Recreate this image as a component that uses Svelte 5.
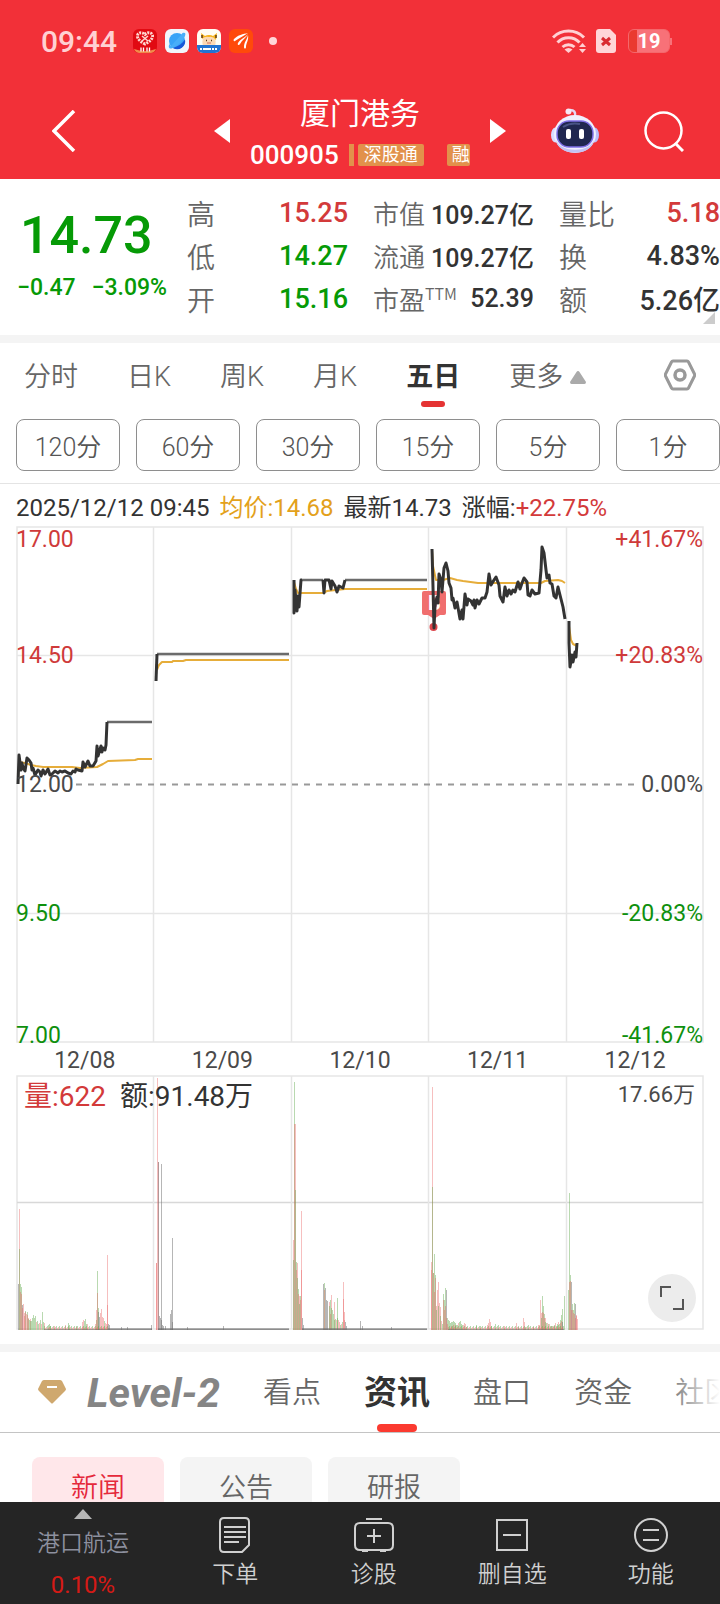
<script>
  let period = '五日';
  let section = '资讯';
  let newsTab = '新闻';

  const periods = ['分时', '日K', '周K', '月K', '五日'];
  const minutes = ['120分', '60分', '30分', '15分', '5分', '1分'];
  const sections = ['看点', '资讯', '盘口', '资金', '社区'];
  const newsTabs = ['新闻', '公告', '研报'];
  const days = ['12/08', '12/09', '12/10', '12/11', '12/12'];

  const stats = [
    [
      { label: '高', value: '15.25', tone: 'up' },
      { label: '低', value: '14.27', tone: 'down' },
      { label: '开', value: '15.16', tone: 'down' }
    ],
    [
      { label: '市值', value: '109.27', unit: '亿' },
      { label: '流通', value: '109.27', unit: '亿' },
      { label: '市盈', sup: 'TTM', value: '52.39' }
    ],
    [
      { label: '量比', value: '5.18', tone: 'up' },
      { label: '换', value: '4.83%' },
      { label: '额', value: '5.26', unit: '亿' }
    ]
  ];

  const axis = [
    { y: 547, price: '17.00', rate: '+41.67%', fill: '#cf3a3a' },
    { y: 663, price: '14.50', rate: '+20.83%', fill: '#cf3a3a' },
    { y: 792, price: '12.00', rate: '0.00%', fill: '#4a4a4a' },
    { y: 921, price: '9.50', rate: '-20.83%', fill: '#0e900e' },
    { y: 1043, price: '7.00', rate: '-41.67%', fill: '#0e900e' }
  ];

  const columns = [153.5, 291.5, 428.5, 566.5];

  const priceLines = [
    '18,784 19,755 21,770 22,763 23,768 25,771 27,758 29,760 31,763 32,770 33,768 35,775 38,770 40,772 41,776 43,770 45,774 48,769 50,775 51,775 55,771 58,773 60,771 62,772 65,771 68,773 71,774 73,771 75,772 76,769 78,770 82,771 83,762 85,767 88,761 90,766 93,766 96,761 97,746 98,756 101,746 102,752 103,748 105,750 106,745 107,722',
    '156,681 157,654',
    '294,580 294,613 295,590 297,611 298,596 299,607 301,580 302,580',
    '323,580 324,593 325,580 329,580 331,589 332,581 335,586 337,592 339,586 343,588 345,580',
    '432,549 433,587 434,628 435,606 437,597 438,603 439,574 441,580 442,592 444,568 446,563 448,571 449,583 451,588 452,600 453,598 455,608 457,602 460,619 462,610 463,619 465,594 467,605 468,599 471,601 473,605 474,600 475,608 477,600 479,604 482,598 485,598 487,592 489,574 491,585 494,580 496,577 499,585 500,596 503,602 505,587 507,596 509,590 511,594 513,590 515,592 518,582 520,589 522,583 524,578 527,582 528,595 530,596 532,590 535,594 539,593 541,570 542,547 544,553 546,570 547,578 549,575 550,583 552,584 554,596 556,598 558,587 561,599 563,607 565,619',
    '569,621 569,643 570,667 572,655 573,662 575,652 576,657 577,643'
  ];

  // limit-up stretches, where the price does not move
  const flatLines = ['107,722 152,722', '157,654 289,654', '302,580 323,580', '345,580 427,580'];

  const averageLines = [
    '19,762 25,763 31,765 36,766 43,767 72,767 80,768 97,767 103,764 108,761 135,760 138,759 152,759',
    '157,670 159,665 162,662 172,662 173,661 183,661 186,660 289,660',
    '294,582 296,589 298,593 323,593 327,591 345,589 427,589',
    '432,550 433,566 436,580 443,580 450,578 457,580 463,581 478,583 541,583 545,581 558,580 562,581 565,583',
    '569,626 571,640 573,644 577,646'
  ];

  // x:height and r (buy), g (sell) or n (flat)
  const spikes = `
    18:46n 19:121r 19:81g 20:46g 20:38r 21:43g 21:36r 22:25n 22:22r 23:26r 24:17r 24:14r 25:19g 25:18r 26:16r 27:18g 27:15r
    28:11g 28:12r 29:10g 30:11r 30:9g 31:9g 32:12g 33:15g 34:12g 35:14g 36:8r 37:9g 38:6g 39:7r 40:10g 41:6r 42:18g 43:8g 44:7r
    48:5g 49:6g 50:4g 54:4r 65:5r 68:7g 69:5g 76:4g 82:8r 83:10r 84:9g 85:11g 86:6g 87:6r 95:6r 96:10g 96:20r 97:59g 97:37r
    98:22g 98:18n 99:13n 100:17r 101:21r 102:13r 103:12r 104:9g 105:7r 106:6r 107:75r 107:25r 108:6n 109:5n 121:3n 127:3n 151:5n
    156:67r 156:67r 157:252r 158:168r 158:168n 159:14n 160:12n 161:166n 161:10n 162:5n 163:4n 165:4n 170:16n 171:20n 172:92n
    172:8n 187:3n 223:4n
    293:90r 293:70g 294:248g 294:206r 295:206r 295:140g 296:68g 296:60r 297:67r 297:52g 298:41g 298:36r 299:34r 299:26g
    300:34g 300:30r 301:119r 301:60r 302:12n 303:5n 323:46n 324:47g 324:40r 325:42n 326:30n 327:29n 329:28r 329:24g 330:30g
    330:16r 331:35r 331:22g 332:20g 333:16g 334:28r 334:10g 335:11g 336:10r 337:32g 337:12g 338:10r 339:8r 340:5g 341:6r
    342:8g 343:48r 343:31r 344:18r 344:10r 345:8n 346:4n 360:9n 362:4n 391:3n
    431:68r 431:60r 432:243r 432:143g 433:57g 433:57r 434:76g 434:38r 435:55g 435:52r 436:24r 436:20g 437:40r 438:48r 438:24g
    439:27r 440:23r 440:14g 441:9r 442:6g 443:36g 443:30r 444:30g 444:20r 445:42g 445:24r 446:40n 446:12r 447:12g 447:6r
    448:10g 449:9g 450:7g 451:8g 451:4r 452:8g 453:9g 453:5r 454:8g 455:7g 455:5r 456:5g 457:5g 458:7r 459:8g 460:9g 461:6g
    462:5g 463:5r 464:7r 465:6r 466:3g 476:5g 480:4g 487:5r 488:7r 489:11r 490:8r 491:4g 495:6g 498:5g 504:4r 516:7r 518:3r
    523:12r 524:8r 525:3g 528:5g 533:3r 538:5r 539:5r 540:30r 541:17r 541:12g 542:34g 542:18r 543:24g 543:17r 544:16g 544:12r
    545:12r 545:8g 546:7g 547:7r 548:6g 549:6r 550:4g 551:4r 552:4g 553:4r 554:5g 555:7r 556:4g 557:6g 558:8r 558:5g 559:6g
    560:10g 560:7r 561:15g 561:9r 562:21g 562:8n 564:34g
    568:40g 569:137g 569:48r 570:55g 570:49r 571:48n 571:20r 572:26g 572:20r 573:20g 573:17r 574:27g 574:16r 575:26n 575:12r
    576:15r 576:14r 577:11r
  `.trim().split(/\s+/).map(readBar);

  const floor = [
    ...floorBars(44, 107, 'rgr'),
    ...floorBars(108, 151, 'n'),
    ...floorBars(158, 288, 'n'),
    ...floorBars(302, 426, 'n'),
    ...floorBars(448, 563, 'rgr')
  ];

  const bars = [...spikes, ...floor];

  function readBar(entry) {
    const [x, rest] = entry.split(':');
    return { x: Number(x), height: parseInt(rest), side: rest.slice(-1) };
  }

  function floorBars(from, to, sides) {
    const list = [];
    for (let x = from; x <= to; x++) {
      const height = sides === 'n' ? 2 : 2 + (x * 7) % 3;
      list.push({ x, height, side: sides[(x * 5) % sides.length] });
      list.push({ x, height: 1, side: 'n' });
    }
    return list;
  }
</script>

<div class="page">
  <header>
    <div class="status">
      <span class="clock">09:44</span>
      <svg class="app" viewBox="0 0 24 24">
        <rect width="24" height="24" rx="6" fill="#e10a12" />
        <path d="M1 20q11 4 22 0a6 6 0 0 1-5 4H6a6 6 0 0 1-5-4z" fill="#f08a4a" />
        <path d="M12 15C8 13 4 10 4.500 6.500 5 3.500 9 2.500 12 5.500c3-3 7-2 7.500 1 .500 3.500-3.500 6.500-7.500 8.500z" fill="none" stroke="#ffd9d2" stroke-width="3" stroke-dasharray="2 1" />
        <path d="m9 7 6 5M15 7l-6 5" stroke="#ffd9d2" stroke-width="1.500" />
        <path d="M8 18.500v4M10.500 18.500v4M14 18.500v4M16.500 18.500v4" stroke="#fff" stroke-width="1.300" />
      </svg>
      <svg class="app" viewBox="0 0 24 24">
        <rect width="24" height="24" rx="6" fill="#f1f5fb" />
        <circle cx="12" cy="12" r="8" fill="#39a3f7" />
        <path d="M4.500 15c-1.500 3-.500 5 2 4.500C12 18 18 12 20 7c1-3 0-4-2.500-3L16 6 6 17z" fill="#48aef9" />
        <path d="M20 10.500a8 8 0 0 1-12 8.500c5-1.500 9.500-4.500 12-8.500z" fill="#1757d8" />
      </svg>
      <svg class="app" viewBox="0 0 24 24">
        <rect width="24" height="24" rx="6" fill="#fffdf5" />
        <path d="M6 17c-2-7 1-11 6-11s8 4 6 11z" fill="#fcd9b4" />
        <path d="M5 10 4 4l4 3q4-2 8 0l4-3-1 7q-3-4-7-3-4-1-7 2z" fill="#f6b31c" />
        <path d="M0 16h24v2a6 6 0 0 1-6 6H6a6 6 0 0 1-6-6z" fill="#2273d2" />
        <path d="M5 6v3M19 6v3M9 11.500h1M14 11.500h1" stroke="#5d3b16" stroke-width="1.500" />
        <path d="M10 14h4" stroke="#d56d58" />
        <path d="M3 20h2m1 0h2m1-1v2m2-2v2m2-2v2m2-1h2m1 0h2" stroke="#fff" stroke-width="2" />
      </svg>
      <svg class="app" viewBox="0 0 24 24">
        <rect width="24" height="24" rx="6" fill="#ff4a0b" />
        <path d="M19 4C14 5 9 6 5 10c-1 1 0 3 1 2C10 9 15 7 19 4z" fill="#fff" />
        <path d="M19 5c-3 4-8 5-10 9-1 2 1 3 2 1 2-4 6-6 8-10z" fill="#fff" />
        <path d="M19 6c-1 5-4 7-4 12 0 2 2 2 2 0 0-4 3-7 2-12z" fill="#fff" />
      </svg>
      <i class="dot"></i>
      <svg class="wifi" viewBox="0 0 34 24">
        <g fill="none" stroke="#ffd0d3" stroke-width="3">
          <path d="M1 8.500a22 22 0 0 1 31 0" />
          <path d="M5.500 13.500a15 15 0 0 1 22 0" />
          <path d="M10.500 18a9 9 0 0 1 12 0" />
        </g>
        <path d="M12.500 20.500a6 6 0 0 1 8 0l-4 3.500z" fill="#ffd0d3" />
        <path d="m30.500 14 3.500 4h-7zM30.500 24l3.500-4h-7z" fill="#ffd0d3" />
      </svg>
      <svg class="sim" viewBox="0 0 20 24">
        <path d="M3 0h11l6 6v15a3 3 0 0 1-3 3H3a3 3 0 0 1-3-3V3a3 3 0 0 1 3-3z" fill="#ffd5d8" />
        <path d="m6 9 8 7M14 9l-8 7" stroke="#d92b32" stroke-width="3" />
      </svg>
      <span class="battery"><b>19</b></span>
    </div>

    <div class="titlebar">
      <button class="back" aria-label="返回">
        <svg width="24" height="42" viewBox="0 0 24 42"><path d="M22 1 2 21l20 20" fill="none" stroke="#fff" stroke-width="3.500" /></svg>
      </button>
      <div class="stock">
        <button aria-label="上一只"><svg width="16" height="24" viewBox="0 0 16 24"><path d="M0 12 16 0v24z" fill="#fff" /></svg></button>
        <div class="name">
          <h1>厦门港务</h1>
          <div class="code">
            <span>000905</span>
            <i class="sliver"></i>
            <em>深股通</em>
            <em class="next">融</em>
          </div>
        </div>
        <button aria-label="下一只"><svg width="16" height="24" viewBox="0 0 16 24"><path d="M16 12 0 0v24z" fill="#fff" /></svg></button>
      </div>
      <button aria-label="智能助手">
        <svg width="48" height="46" viewBox="0 0 48 46">
          <path d="M24 9c1-5-1-7-5-7" fill="none" stroke="#e5d6f3" stroke-width="2.500" />
          <circle cx="17.500" cy="3.500" r="3" fill="#f7e8f5" />
          <ellipse cx="4.500" cy="27" rx="4.500" ry="7.500" fill="#d9dbff" />
          <ellipse cx="43.500" cy="27" rx="4.500" ry="7.500" fill="#b9bdfa" />
          <ellipse cx="24" cy="26" rx="21" ry="19" fill="#f0f0ff" />
          <path d="M5 32c5 13 33 13 38 0-2 17-36 17-38 0z" fill="#c3c3f3" />
          <rect x="6" y="13" width="36" height="26" rx="12" fill="#202750" stroke="#7f70e8" stroke-width="1.500" />
          <path d="M12 19q8-5 17-3" stroke="#495486" stroke-width="2" fill="none" />
          <rect x="15" y="21" width="5" height="10" rx="2" fill="#fff" />
          <rect x="28" y="21" width="5" height="10" rx="2" fill="#fff" />
        </svg>
      </button>
      <button aria-label="搜索">
        <svg width="40" height="42" viewBox="0 0 40 42"><g fill="none" stroke="#fff" stroke-width="2.500"><circle cx="19.500" cy="20.500" r="18" /><path d="m31 33 8 8" stroke-width="3" /></g></svg>
      </button>
    </div>
  </header>

  <section class="quote">
    <div class="price down">
      <strong>14.73</strong>
      <p><span>−0.47</span><span>−3.09%</span></p>
    </div>
    {#each stats as column}
      <dl>
        {#each column as item}
          <div>
            <dt>{item.label}{#if item.sup}<sup>{item.sup}</sup>{/if}</dt>
            <dd class={item.tone}>{item.value}{#if item.unit}<span>{item.unit}</span>{/if}</dd>
          </div>
        {/each}
      </dl>
    {/each}
    <i class="corner"></i>
  </section>

  <nav class="periods">
    {#each periods as item}
      <button class:active={period === item} on:click={() => (period = item)}>{item}</button>
    {/each}
    <button class="more">更多<svg width="16" height="13" viewBox="0 0 16 13"><path d="M8 0q1 0 1.500 1L16 11q0 2-1.500 2h-13Q0 13 0 11L6.500 1Q7 0 8 0z" fill="#aaa" /></svg></button>
    <button class="settings" aria-label="设置">
      <svg width="32" height="32" viewBox="0 0 32 32"><g fill="none" stroke="#999" stroke-width="3"><path d="M9 2h14q1 0 1.500 1l6 12q.500 1 0 2l-6 12q-.500 1-1.500 1H9q-1 0-1.500-1l-6-12q-.500-1 0-2l6-12Q8 2 9 2z" /><circle cx="16" cy="16" r="5" stroke-width="3.500" /></g></svg>
    </button>
  </nav>

  <div class="minutes">
    {#each minutes as item}
      <button>{item}</button>
    {/each}
  </div>

  <section class="chart">
    <p class="summary">
      <span>2025/12/12 09:45</span>
      <span class="avg">均价:14.68</span>
      <span>最新14.73</span>
      <span>涨幅:<b>+22.75%</b></span>
    </p>

    <svg class="plot" viewBox="16 526 688 517">
      <g fill="none" stroke="#e6e6e6" stroke-width="1.500">
        <rect x="17" y="527" width="686" height="515" />
        <path d="M17 655.500H703M17 913.500H703" />
        {#each columns as x}
          <path d="M{x} 527V1042" />
        {/each}
      </g>
      <path d="M76 784.500H636" stroke="#999" stroke-width="2" stroke-dasharray="6 6" />
      <rect x="422" y="591" width="24" height="24" rx="2" fill="#f06e6e" />
      <path d="m428 615 6 4 6-4z" fill="#f06e6e" />
      <text x="428" y="610" font-size="20" font-weight="700" fill="#fff">B</text>
      <circle cx="433.500" cy="627" r="4" fill="#dc474d" />
      <g fill="none" stroke-linejoin="round">
        {#each averageLines as points}
          <polyline {points} stroke="#e6ad3a" stroke-width="2" />
        {/each}
        {#each flatLines as points}
          <polyline {points} stroke="#6b6b6b" stroke-width="2.500" />
        {/each}
        {#each priceLines as points}
          <polyline {points} stroke="#333" stroke-width="3" />
        {/each}
      </g>
      {#each axis as row}
        <text x="16" y={row.y} fill={row.fill}>{row.price}</text>
        <text x="703" y={row.y} fill={row.fill} text-anchor="end">{row.rate}</text>
      {/each}
    </svg>

    <div class="days">
      {#each days as day}
        <span>{day}</span>
      {/each}
    </div>

    <div class="volume">
      <svg class="plot" viewBox="16 1075 688 255">
        <g fill="none" stroke="#e6e6e6" stroke-width="1.500">
          <rect x="17" y="1076" width="686" height="253" />
          <path d="M17 1202.500H703" stroke="#d8d8d8" />
          {#each columns as x}
            <path d="M{x} 1076V1329" />
          {/each}
        </g>
        <g shape-rendering="crispEdges">
          {#each bars as bar}
            <rect class={bar.side} x={bar.x} y={1330 - bar.height} width="1" height={bar.height} />
          {/each}
        </g>
      </svg>
      <p class="amounts"><span class="vol">量:622</span><span>额:91.48万</span></p>
      <span class="max">17.66万</span>
      <button class="expand" aria-label="全屏">
        <svg width="24" height="24" viewBox="0 0 24 24"><path d="M1 11V1h10M23 13v10H13" fill="none" stroke="#555" stroke-width="2" /></svg>
      </button>
    </div>
  </section>

  <nav class="sections">
    <svg class="gem" width="28" height="24" viewBox="0 0 28 24">
      <path d="M6 0h16q1 0 2 1l4 8q0 1-1 2L15 23q-1 1-2 0L1 11Q0 10 0 9l4-8Q5 0 6 0z" fill="#cfa86e" />
      <path d="M9 7h10" stroke="#fff" stroke-width="2" />
    </svg>
    <button class="level">Level-2</button>
    {#each sections as item}
      <button class:active={section === item} on:click={() => (section = item)}>{item}</button>
    {/each}
  </nav>

  <div class="news">
    {#each newsTabs as item}
      <button class:active={newsTab === item} on:click={() => (newsTab = item)}>{item}</button>
    {/each}
  </div>

  <footer>
    <button class="sector">
      <svg width="18" height="10" viewBox="0 0 18 10"><path d="M9 0 18 10H0z" fill="#b5b5b5" /></svg>
      <span>港口航运</span>
      <b>0.10%</b>
    </button>
    <button>
      <svg width="36" height="36" viewBox="0 0 36 36"><path d="M7 1h21q4 0 4 4v23l-7 7H7q-4 0-4-4V5q0-4 4-4zM32 28l-7 7M7 10h22M7 15h22M7 20h22M7 25h15" /></svg>
      下单
    </button>
    <button>
      <svg width="40" height="36" viewBox="0 0 40 36"><path d="M12 2h16M20 12v14M13 19h14M6 6h28q5 0 5 5v17q0 5-5 5H6q-5 0-5-5V11q0-5 5-5zM8 34h6M26 34h6" /></svg>
      诊股
    </button>
    <button>
      <svg width="36" height="36" viewBox="0 0 36 36"><path d="M3 3h30v30H3zM9 18h18" /></svg>
      删自选
    </button>
    <button>
      <svg width="36" height="36" viewBox="0 0 36 36"><circle cx="18" cy="18" r="16" /><path d="M10 13h16M10 23h16" /></svg>
      功能
    </button>
  </footer>
</div>

<style>
  :global(body) {
    background: #fff;
  }

  .page {
    min-height: 100vh;
    box-sizing: border-box;
    padding-bottom: 102px;
    overflow: hidden;
    font-family: Roboto, "Noto Sans CJK SC", sans-serif;
    font-weight: 400;
    color: #333;
  }

  button {
    border: none;
    background: none;
    padding: 0;
    font: inherit;
    color: inherit;
    white-space: nowrap;
    cursor: pointer;
  }

  svg {
    display: block;
    flex: none;
  }

  p,
  h1,
  dl,
  dd {
    margin: 0;
  }

  i,
  em {
    font-style: normal;
  }

  .up {
    color: #d33a3a;
  }

  .down {
    color: #069a06;
  }

  header {
    background: #f23038;
    color: #fff;
  }

  .status {
    display: flex;
    align-items: center;
    gap: 8px;
    height: 82px;
    padding: 0 50px 0 41px;
  }

  .clock {
    margin-right: 8px;
    font-size: 30px;
    font-weight: 500;
    color: #ffd0d3;
  }

  .app {
    width: 24px;
    height: 24px;
  }

  .dot {
    width: 8px;
    height: 8px;
    margin-left: 8px;
    border-radius: 50%;
    background: #ffd5d8;
  }

  .wifi {
    width: 34px;
    height: 24px;
    margin-left: auto;
  }

  .sim {
    width: 20px;
    height: 24px;
    margin-left: 2px;
  }

  .battery {
    position: relative;
    box-sizing: border-box;
    width: 42px;
    margin-left: 4px;
    border: 1px solid #f4686c;
    border-radius: 6px;
    background: linear-gradient(90deg, #ea3a30 8px, #f87178 8px);
    text-align: center;
    font-size: 20px;
    line-height: 22px;
  }

  .battery::after {
    content: "";
    position: absolute;
    top: 8px;
    right: -3px;
    width: 2px;
    height: 7px;
    background: #f87178;
  }

  .titlebar {
    display: flex;
    align-items: center;
    gap: 45px;
    height: 97px;
    padding: 0 36px 0 52px;
  }

  .back {
    margin-right: auto;
  }

  .stock {
    display: flex;
    align-items: center;
    gap: 20px;
  }

  .name {
    width: 220px;
    padding-top: 4px;
    overflow: hidden;
  }

  h1 {
    font-size: 30px;
    font-weight: 400;
    line-height: 44px;
    text-align: center;
  }

  .code {
    display: flex;
    align-items: center;
    height: 38px;
    white-space: nowrap;
    font-size: 26px;
    font-weight: 500;
  }

  .sliver {
    flex: none;
    width: 5px;
    height: 22px;
    margin: 0 4px 0 10px;
    background: #e2914b;
  }

  .code em {
    flex: none;
    padding: 0 6px;
    border-radius: 2px;
    background: #e2914b;
    font-size: 18px;
    font-weight: 400;
    line-height: 22px;
  }

  .code .next {
    margin-left: 23px;
    padding: 0 0 0 5px;
  }

  .quote {
    position: relative;
    display: grid;
    grid-template-columns: 162px repeat(3, 1fr);
    column-gap: 25px;
    padding: 12px 0 15px;
    border-bottom: 8px solid #f4f4f4;
    font-weight: 500;
  }

  .price {
    padding-left: 17px;
    white-space: nowrap;
  }

  .price strong {
    display: block;
    padding-left: 3px;
    font-size: 52px;
    font-weight: 500;
    line-height: 90px;
  }

  .price p {
    display: flex;
    gap: 16px;
    font-size: 23px;
    line-height: 14px;
  }

  .quote dl div {
    display: flex;
    justify-content: space-between;
    align-items: center;
    height: 43px;
    white-space: nowrap;
  }

  dt {
    font-family: "Noto Sans CJK SC", sans-serif;
    font-size: 28px;
    font-weight: 350;
    line-height: 38px;
    color: #666;
  }

  dl:nth-of-type(2) dt {
    font-size: 26px;
  }

  sup {
    font-size: 16px;
    line-height: 0;
  }

  dd {
    font-size: 27px;
  }

  dl:nth-of-type(2) dd {
    font-size: 25px;
  }

  .corner {
    position: absolute;
    right: 5px;
    bottom: 11px;
    border-left: 12px solid transparent;
    border-bottom: 12px solid #ccc;
  }

  .periods {
    display: flex;
    align-items: center;
    gap: 49px;
    height: 64px;
    padding: 0 24px;
    font-size: 27px;
    font-weight: 350;
    color: #666;
  }

  .periods button {
    position: relative;
    padding-top: 4px;
    line-height: 60px;
  }

  .periods .active {
    font-weight: 700;
    color: #333;
  }

  .periods .active::after {
    content: "";
    position: absolute;
    left: 50%;
    bottom: 0;
    width: 24px;
    height: 6px;
    margin-left: -12px;
    border-radius: 3px;
    background: #e53333;
  }

  .more {
    display: flex;
    align-items: center;
    gap: 7px;
  }

  .periods .settings {
    margin-left: auto;
    padding: 0;
  }

  .minutes {
    display: grid;
    grid-template-columns: repeat(6, 1fr);
    gap: 16px;
    padding: 12px 0 12px 16px;
    border-bottom: 1px solid #e4e4e4;
  }

  .minutes button {
    height: 52px;
    border: 1px solid #8e8e8e;
    border-radius: 8px;
    font-size: 25px;
    font-weight: 350;
    color: #555;
  }

  .chart {
    padding: 0 16px 14px;
    border-bottom: 8px solid #f4f4f4;
  }

  .summary {
    display: flex;
    gap: 10px;
    padding-top: 6px;
    font-size: 24px;
    line-height: 36px;
    height: 36px;
    white-space: nowrap;
  }

  .summary .avg {
    color: #e3a11b;
  }

  .summary b {
    font-weight: 400;
    color: #d33a3a;
  }

  .plot {
    width: 100%;
    overflow: visible;
    font-size: 23px;
  }

  .days {
    display: grid;
    grid-template-columns: repeat(5, 1fr);
    padding-top: 4px;
    text-align: center;
    font-size: 23px;
    line-height: 28px;
    color: #4a4a4a;
  }

  .volume {
    position: relative;
  }

  .r {
    fill: rgba(232, 96, 96, 0.4);
  }

  .g {
    fill: rgba(100, 170, 80, 0.45);
  }

  .n {
    fill: rgba(110, 110, 110, 0.5);
  }

  .amounts {
    position: absolute;
    top: 0;
    left: 8px;
    display: flex;
    gap: 14px;
    font-size: 28px;
    line-height: 44px;
  }

  .vol {
    color: #d33a3a;
  }

  .max {
    position: absolute;
    top: 0;
    right: 9px;
    font-size: 22px;
    line-height: 40px;
    color: #4a4a4a;
  }

  .expand {
    position: absolute;
    right: 8px;
    bottom: 8px;
    display: grid;
    place-items: center;
    width: 48px;
    height: 48px;
    border-radius: 50%;
    background: #ececec;
  }

  .sections {
    position: relative;
    display: flex;
    align-items: center;
    gap: 43px;
    height: 80px;
    padding-left: 38px;
    overflow: hidden;
    border-bottom: 1px solid #c4c4c4;
    font-size: 29px;
    font-weight: 350;
    color: #666;
  }

  .sections::after {
    content: "";
    position: absolute;
    top: 0;
    right: 0;
    width: 56px;
    height: 100%;
    background: linear-gradient(90deg, rgba(255, 255, 255, 0), #fff);
  }

  .sections button {
    position: relative;
    padding-top: 2px;
    line-height: 78px;
  }

  .gem {
    margin-right: -22px;
  }

  .sections .level {
    font-size: 41px;
    font-style: italic;
    font-weight: 700;
    color: #858585;
  }

  .sections .active {
    font-size: 33px;
    font-weight: 700;
    color: #333;
  }

  .sections .active::after {
    content: "";
    position: absolute;
    left: 50%;
    bottom: 0;
    width: 40px;
    height: 8px;
    margin-left: -20px;
    border-radius: 4px;
    background: #fb3a30;
  }

  .news {
    display: flex;
    gap: 16px;
    padding: 24px 32px 0;
  }

  .news button {
    width: 132px;
    height: 56px;
    border-radius: 8px;
    background: #f4f4f4;
    font-size: 27px;
    font-weight: 350;
    color: #666;
  }

  .news .active {
    background: #ffe7ea;
    color: #e5293b;
  }

  footer {
    position: fixed;
    left: 0;
    right: 0;
    bottom: 0;
    display: grid;
    grid-template-columns: 166px repeat(4, 1fr);
    height: 102px;
    background: #252525;
    color: #d0d0d0;
    font-size: 23px;
    font-weight: 350;
  }

  footer button {
    display: flex;
    flex-direction: column;
    align-items: center;
    padding-top: 15px;
    line-height: 44px;
  }

  footer svg {
    fill: none;
    stroke: #d0d0d0;
    stroke-width: 2;
  }

  footer .sector {
    padding-top: 7px;
    color: #8d909f;
    line-height: 50px;
  }

  .sector svg {
    stroke: none;
  }

  .sector b {
    font-size: 24px;
    font-weight: 400;
    line-height: 32px;
    color: #d51a16;
  }
</style>
